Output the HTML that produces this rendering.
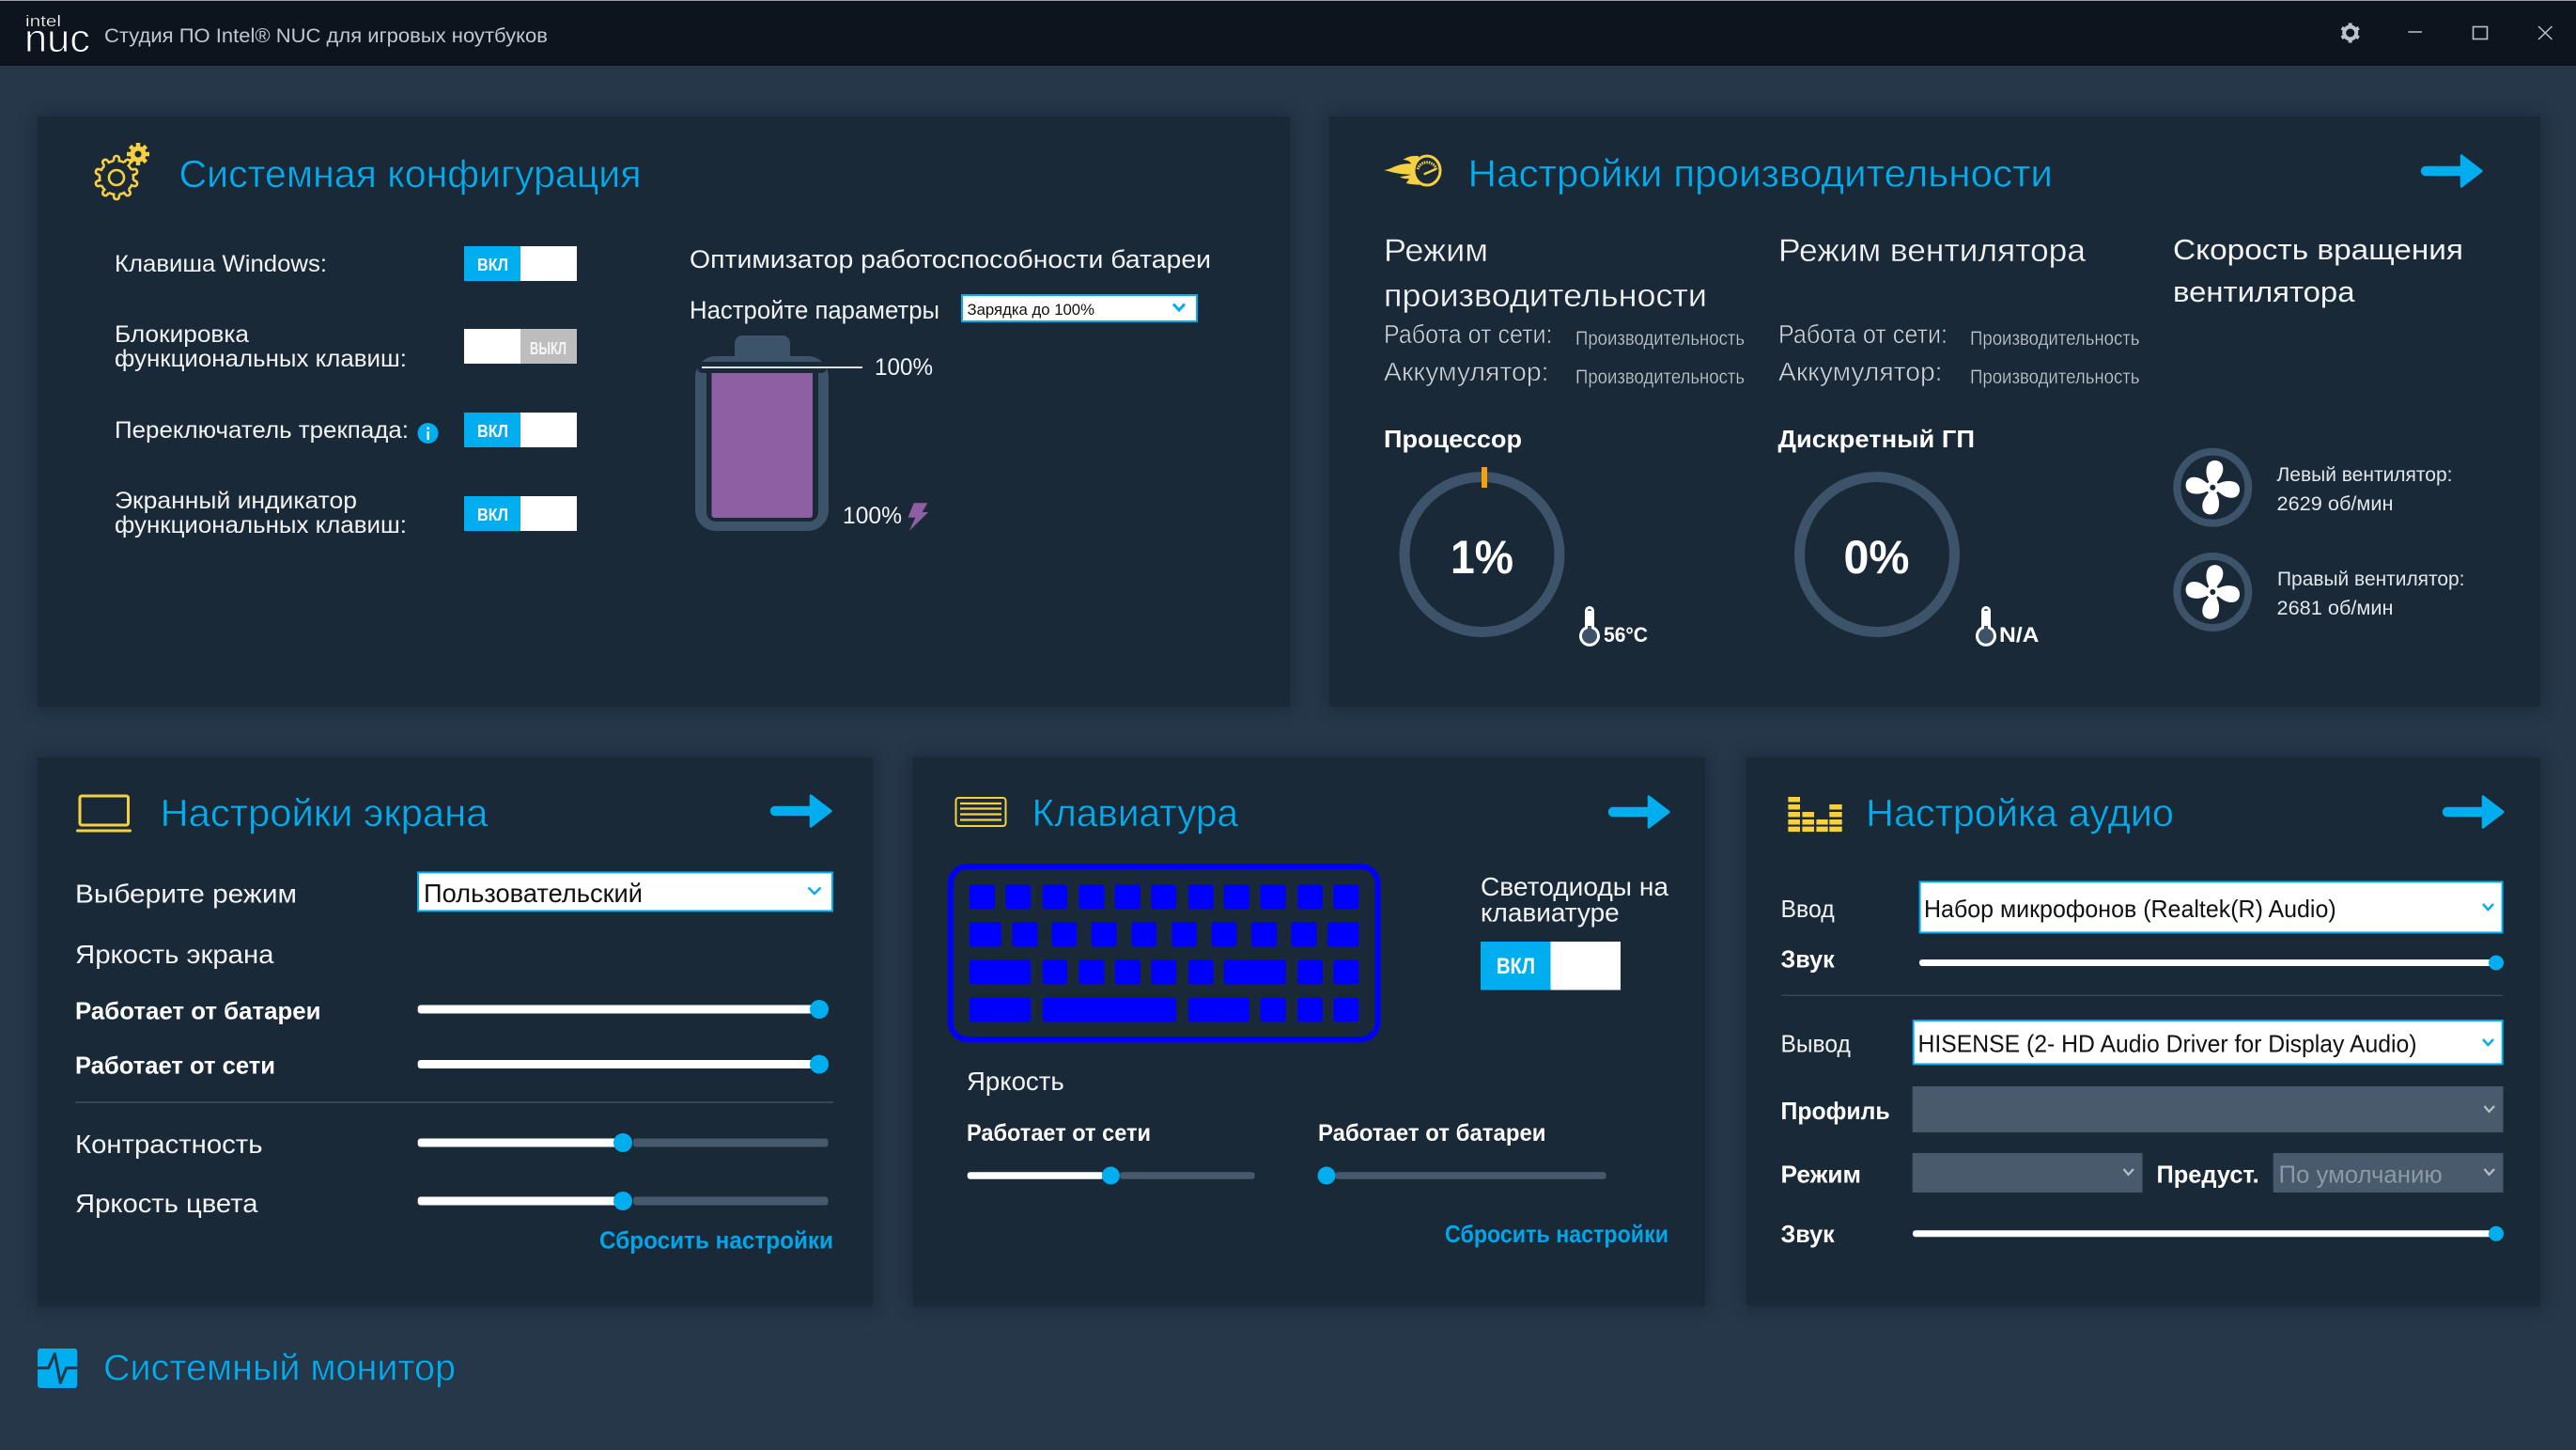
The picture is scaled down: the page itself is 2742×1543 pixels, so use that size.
<!DOCTYPE html>
<html lang="ru"><head><meta charset="utf-8"><title>Студия ПО Intel NUC</title>
<style>
html,body{margin:0;padding:0;width:2742px;height:1543px;overflow:hidden;background:#26374a}
.p{position:absolute;background:#1a2938;box-shadow:0 0 16px 2px rgba(14,24,36,.42)}
svg{position:absolute;left:0;top:0}
text{font-family:"Liberation Sans",sans-serif;fill:#f2f4f6}
.b{font-weight:700;fill:#fff}
.t{fill:#00aeef;font-size:41px;stroke:#1a2938;stroke-width:.6px}
.l{font-size:25px}
.m{font-size:28px}
.h{font-size:34px;stroke:#1a2938;stroke-width:.4px}
.h2{font-size:31px}
.d{font-size:28px;fill:#d0d5da;stroke:#1a2938;stroke-width:.6px}
.s{font-size:21px;fill:#c2c8ce;stroke:#1a2938;stroke-width:.3px}
.f{font-size:21px;fill:#e2e6ea}
.k{fill:#00f}
.y{fill:#f5d142}
</style></head><body>
<div style="position:absolute;left:0;top:0;width:2742px;height:70px;background:#0d141d;border-top:1px solid #9aa0a6;box-sizing:border-box"></div>
<div class="p" style="left:40px;top:124px;width:1333px;height:628px"></div>
<div class="p" style="left:1415px;top:124px;width:1289px;height:628px"></div>
<div class="p" style="left:40px;top:806px;width:889px;height:584px"></div>
<div class="p" style="left:972px;top:806px;width:843px;height:584px"></div>
<div class="p" style="left:1859px;top:806px;width:845px;height:584px"></div>
<svg width="2742" height="1543" viewBox="0 0 2742 1543" xmlns="http://www.w3.org/2000/svg">
<defs>
<path id="arrow" d="M4 15H42V2.5L63.5 19 42 35.5V23H4a4 4 0 0 1 0-8Z" fill="#00aeef" stroke="#00aeef" stroke-width="2.5" stroke-linejoin="round"/>
<path id="tooth" d="M-2.8-17.8Q-3.5-23 0-23Q3.5-23 2.8-17.8A18 18 0 0 1 8.17-16.04" fill="none" stroke="#f5d142" stroke-width="2.6"/>
<path id="blade" d="M0 0C-6-7-9-17-5-25C-1-31 11-30 11-20C11-12 5-7 0 0Z" fill="#fff"/>
<g id="fan">
<circle r="38" fill="none" stroke="#3d5369" stroke-width="8"/>
<use href="#blade"/><use href="#blade" transform="rotate(90)"/><use href="#blade" transform="rotate(180)"/><use href="#blade" transform="rotate(270)"/>
<circle r="7" fill="#fff"/><circle r="3" fill="#1a2938"/>
</g>
<path id="therm" d="M-3.5-9V-27a3.5 3.5 0 0 1 7 0V-9a9.5 9.5 0 1 1-7 0Z" fill="#3d5369" stroke="#fff" stroke-width="3"/>
</defs>

<!-- title bar -->
<text x="27" y="28" font-size="17" textLength="38" lengthAdjust="spacingAndGlyphs" style="fill:#fff;stroke:#0d141d;stroke-width:.3px">intel</text>
<text x="26" y="55" font-size="42" textLength="70" lengthAdjust="spacingAndGlyphs" style="fill:#fff;stroke:#0d141d;stroke-width:1px">nuc</text>
<text x="111" y="45" font-size="21" textLength="472" lengthAdjust="spacingAndGlyphs" style="fill:#bfc8d0">Студия ПО Intel® NUC для игровых ноутбуков</text>
<g transform="translate(2501.7 35)" fill="#b9c4ce">
<circle r="6.5" fill="none" stroke="#b9c4ce" stroke-width="4"/>
<g stroke="#b9c4ce" stroke-width="4"><path d="M0-10.5V-7M0 7V10.5M-9.1-5.2-6-3.5M6 3.5 9.1 5.2M-9.1 5.2-6 3.5M6-3.5 9.1-5.2"/></g>
</g>
<path d="M2563.3 34H2578" stroke="#b9c4ce" stroke-width="1.5"/>
<rect x="2632.5" y="28.5" width="15" height="13" fill="none" stroke="#b9c4ce" stroke-width="1.6"/>
<path d="M2702 28L2716.5 42M2716.5 28L2702 42" stroke="#b9c4ce" stroke-width="1.5"/>

<!-- system config -->
<g transform="translate(124 189)">
<use href="#tooth"/><use href="#tooth" transform="rotate(36)"/><use href="#tooth" transform="rotate(72)"/><use href="#tooth" transform="rotate(108)"/><use href="#tooth" transform="rotate(144)"/><use href="#tooth" transform="rotate(180)"/><use href="#tooth" transform="rotate(216)"/><use href="#tooth" transform="rotate(252)"/><use href="#tooth" transform="rotate(288)"/><use href="#tooth" transform="rotate(324)"/>
<circle r="8" fill="none" stroke="#f5d142" stroke-width="2.6"/>
</g>
<g transform="translate(147 164)">
<circle r="8.5" class="y"/>
<path d="M0-12V12M-12 0H12M-8.5-8.5 8.5 8.5M-8.5 8.5 8.5-8.5" stroke="#f5d142" stroke-width="4.5"/>
<circle r="3.5" fill="#1a2938"/>
</g>
<text class="t" x="190.5" y="199" textLength="492" lengthAdjust="spacingAndGlyphs">Системная конфигурация</text>

<text class="l" x="122" y="289" textLength="226" lengthAdjust="spacingAndGlyphs">Клавиша Windows:</text>
<text class="l" x="122" y="364" textLength="143" lengthAdjust="spacingAndGlyphs">Блокировка</text>
<text class="l" x="122" y="390" textLength="311" lengthAdjust="spacingAndGlyphs">функциональных клавиш:</text>
<text class="l" x="122" y="466" textLength="313" lengthAdjust="spacingAndGlyphs">Переключатель трекпада:</text>
<text class="l" x="122" y="541" textLength="258" lengthAdjust="spacingAndGlyphs">Экранный индикатор</text>
<text class="l" x="122" y="567" textLength="311" lengthAdjust="spacingAndGlyphs">функциональных клавиш:</text>
<circle cx="455.5" cy="461" r="11" fill="#00aeef"/>
<rect x="454.5" y="459" width="2.4" height="9" fill="#fff"/><rect x="454.5" y="454.5" width="2.4" height="2.4" fill="#fff"/>

<rect x="494" y="262" width="60" height="37" fill="#00aeef"/><rect x="554" y="262" width="60" height="37" fill="#fff"/>
<text class="b" x="508" y="288" font-size="18" textLength="33" lengthAdjust="spacingAndGlyphs">ВКЛ</text>
<rect x="494" y="350" width="60" height="37" fill="#fff"/><rect x="554" y="350" width="60" height="37" fill="#bdbdbd"/>
<text class="b" x="564" y="377" font-size="18" textLength="39" lengthAdjust="spacingAndGlyphs" style="fill:#f6f6f6">ВЫКЛ</text>
<rect x="494" y="439" width="60" height="37" fill="#00aeef"/><rect x="554" y="439" width="60" height="37" fill="#fff"/>
<text class="b" x="508" y="465" font-size="18" textLength="33" lengthAdjust="spacingAndGlyphs">ВКЛ</text>
<rect x="494" y="528" width="60" height="37" fill="#00aeef"/><rect x="554" y="528" width="60" height="37" fill="#fff"/>
<text class="b" x="508" y="554" font-size="18" textLength="33" lengthAdjust="spacingAndGlyphs">ВКЛ</text>

<text x="734" y="285" font-size="27" textLength="555" lengthAdjust="spacingAndGlyphs">Оптимизатор работоспособности батареи</text>
<text x="734" y="339" font-size="27" textLength="266" lengthAdjust="spacingAndGlyphs">Настройте параметры</text>
<rect x="1024" y="314" width="250" height="28" fill="#fff" stroke="#00aeef" stroke-width="2"/>
<text x="1029.500" y="335" font-size="17" textLength="135.500" lengthAdjust="spacingAndGlyphs" style="fill:#111">Зарядка до 100%</text>
<path d="M1249 323.500L1255 330 1261 323.500" fill="none" stroke="#00aeef" stroke-width="3"/>

<path d="M782 379V365a8 8 0 0 1 8-8H833a8 8 0 0 1 8 8V379H860a22 22 0 0 1 22 22V543a22 22 0 0 1-22 22H762a22 22 0 0 1-22-22V401a22 22 0 0 1 22-22Z" fill="#3d5369"/>
<rect x="742" y="385" width="138" height="12" rx="6" fill="#1a2938"/>
<path d="M752 390H871V545a10 10 0 0 1-10 10H762a10 10 0 0 1-10-10Z" fill="#1a2938"/>
<path d="M757.500 397H865V548a3 3 0 0 1-3 3H760.500a3 3 0 0 1-3-3Z" fill="#8f5fa3"/>
<rect x="747" y="390" width="171" height="2" fill="#dde0e3"/>
<text x="931" y="399" font-size="25" textLength="62" lengthAdjust="spacingAndGlyphs">100%</text>
<text x="897" y="557" font-size="25" textLength="63" lengthAdjust="spacingAndGlyphs">100%</text>
<polygon points="972.700,535.300 987.300,535.300 981.600,545 988.200,545 967.800,565 974.300,550.700 966.500,550.700" fill="#8f5fa3"/>

<!-- performance -->
<path d="M1510 166Q1500 165 1493.300 170Q1500 170 1502.300 174.300Q1493.300 173.300 1483.300 177.700Q1479 180 1473.300 181Q1481.700 183.300 1486.700 184.300Q1493.300 185.700 1502.300 185.700Q1496.700 187.300 1490 188.300Q1495 191 1500 190Q1498.300 193.300 1496.700 195Q1503.300 196.700 1515 196.700L1510 180Z" class="y"/>
<ellipse cx="1519" cy="181.500" rx="14" ry="15.500" fill="#1a2938" stroke="#f5d142" stroke-width="3"/>
<path d="M1509 180A10.500 10.500 0 0 1 1529 180" fill="none" stroke="#f5d142" stroke-width="3" stroke-dasharray="1.500 1"/>
<path d="M1516.700 185L1528 180" stroke="#f5d142" stroke-width="2.500" stroke-linecap="round"/>
<text class="t" x="1562.500" y="198.500" textLength="622.500" lengthAdjust="spacingAndGlyphs">Настройки производительности</text>
<use href="#arrow" transform="translate(2578 163)"/>

<text class="h" x="1473" y="278" textLength="111" lengthAdjust="spacingAndGlyphs">Режим</text>
<text class="h" x="1473" y="326" textLength="344" lengthAdjust="spacingAndGlyphs">производительности</text>
<text class="h" x="1893" y="278" textLength="327" lengthAdjust="spacingAndGlyphs">Режим вентилятора</text>
<text class="h2" x="2313" y="276" textLength="309" lengthAdjust="spacingAndGlyphs">Скорость вращения</text>
<text class="h2" x="2313" y="321" textLength="193.500" lengthAdjust="spacingAndGlyphs">вентилятора</text>

<text class="d" x="1473" y="365" textLength="179.500" lengthAdjust="spacingAndGlyphs">Работа от сети:</text>
<text class="d" x="1473" y="405" textLength="175.500" lengthAdjust="spacingAndGlyphs">Аккумулятор:</text>
<text class="s" x="1677" y="367" textLength="180" lengthAdjust="spacingAndGlyphs">Производительность</text>
<text class="s" x="1677" y="408" textLength="180" lengthAdjust="spacingAndGlyphs">Производительность</text>
<text class="d" x="1893" y="365" textLength="180" lengthAdjust="spacingAndGlyphs">Работа от сети:</text>
<text class="d" x="1893" y="405" textLength="174.500" lengthAdjust="spacingAndGlyphs">Аккумулятор:</text>
<text class="s" x="2097" y="367" textLength="180.500" lengthAdjust="spacingAndGlyphs">Производительность</text>
<text class="s" x="2097" y="408" textLength="180.500" lengthAdjust="spacingAndGlyphs">Производительность</text>

<text class="b" x="1473" y="476" font-size="26" textLength="147" lengthAdjust="spacingAndGlyphs">Процессор</text>
<text class="b" x="1892.500" y="476" font-size="26" textLength="209.500" lengthAdjust="spacingAndGlyphs">Дискретный ГП</text>
<circle cx="1577.500" cy="590" r="82.500" fill="none" stroke="#3d5369" stroke-width="11"/>
<rect x="1577" y="497" width="6" height="22" fill="#f7a200"/>
<text class="b" x="1544" y="610" font-size="50" textLength="67" lengthAdjust="spacingAndGlyphs">1%</text>
<circle cx="1998" cy="590" r="82.500" fill="none" stroke="#3d5369" stroke-width="11"/>
<text class="b" x="1962.500" y="610" font-size="50" textLength="70" lengthAdjust="spacingAndGlyphs">0%</text>
<use href="#therm" transform="translate(1692 677)"/><path d="M1692 650V666" stroke="#fff" stroke-width="5"/>
<use href="#therm" transform="translate(2114 677)"/><path d="M2114 650V666" stroke="#fff" stroke-width="5"/>
<text class="b" x="1707" y="683" font-size="22" textLength="47" lengthAdjust="spacingAndGlyphs">56°C</text>
<text class="b" x="2128" y="683" font-size="22" textLength="42.500" lengthAdjust="spacingAndGlyphs">N/A</text>

<use href="#fan" transform="translate(2355.300 518.700)"/>
<use href="#fan" transform="translate(2355.300 630)"/>
<text class="f" x="2423.500" y="512" textLength="187" lengthAdjust="spacingAndGlyphs">Левый вентилятор:</text>
<text class="f" x="2423.500" y="543" textLength="124" lengthAdjust="spacingAndGlyphs">2629 об/мин</text>
<text class="f" x="2424" y="623" textLength="199.500" lengthAdjust="spacingAndGlyphs">Правый вентилятор:</text>
<text class="f" x="2423.500" y="654" textLength="124" lengthAdjust="spacingAndGlyphs">2681 об/мин</text>

<!-- display -->
<rect x="85" y="847" width="51.500" height="31" rx="2" fill="none" stroke="#f5d142" stroke-width="3"/>
<rect x="81" y="882.500" width="59" height="3" rx="1.500" class="y"/>
<text class="t" x="170.500" y="879" textLength="349" lengthAdjust="spacingAndGlyphs">Настройки экрана</text>
<use href="#arrow" transform="translate(821 844)"/>
<text class="m" x="80" y="960.500" textLength="236" lengthAdjust="spacingAndGlyphs">Выберите режим</text>
<rect x="445" y="928.400" width="441" height="41" fill="#fff" stroke="#00aeef" stroke-width="2"/>
<text class="m" x="451" y="960" textLength="233" lengthAdjust="spacingAndGlyphs" style="fill:#111">Пользовательский</text>
<path d="M860.500 944.500L867 951 873.500 944.500" fill="none" stroke="#00aeef" stroke-width="2.500"/>
<text class="m" x="80" y="1025" textLength="211.500" lengthAdjust="spacingAndGlyphs">Яркость экрана</text>
<text class="b" x="80" y="1084.500" font-size="26" textLength="261.500" lengthAdjust="spacingAndGlyphs">Работает от батареи</text>
<rect x="444.700" y="1069.500" width="428" height="9" rx="3" fill="#fff"/><circle cx="872" cy="1074" r="10" fill="#00aeef"/>
<text class="b" x="80" y="1142.300" font-size="26" textLength="213" lengthAdjust="spacingAndGlyphs">Работает от сети</text>
<rect x="444.700" y="1128" width="428" height="9" rx="3" fill="#fff"/><circle cx="872" cy="1132.500" r="10" fill="#00aeef"/>
<rect x="80" y="1172" width="807" height="2" fill="#344658"/>
<text class="m" x="80" y="1227" textLength="199.500" lengthAdjust="spacingAndGlyphs">Контрастность</text>
<rect x="444.700" y="1211.500" width="215" height="9" rx="3" fill="#fff"/><rect x="674" y="1211.500" width="207.500" height="9" rx="3" fill="#475a6d"/><circle cx="663" cy="1216" r="10" fill="#00aeef"/>
<text class="m" x="80" y="1290" textLength="194.500" lengthAdjust="spacingAndGlyphs">Яркость цвета</text>
<rect x="444.700" y="1273.500" width="215" height="9" rx="3" fill="#fff"/><rect x="674" y="1273.500" width="207.500" height="9" rx="3" fill="#475a6d"/><circle cx="663" cy="1278" r="10" fill="#00aeef"/>
<text class="b" x="638" y="1328.600" font-size="26" textLength="249" lengthAdjust="spacingAndGlyphs" style="fill:#00a6e8">Сбросить настройки</text>

<!-- keyboard -->
<rect x="1017.500" y="849" width="53" height="30" rx="3" fill="none" stroke="#f5d142" stroke-width="2"/>
<path d="M1022 855H1066M1022 860.500H1066M1022 866.500H1066M1022 872.500H1066" stroke="#f5d142" stroke-width="2.200"/>
<text class="t" x="1098.500" y="879" textLength="219.500" lengthAdjust="spacingAndGlyphs">Клавиатура</text>
<use href="#arrow" transform="translate(1713 845)"/>
<rect x="1011.800" y="922" width="454.700" height="184" rx="18" fill="none" stroke="#00f" stroke-width="6"/>
<g class="k">
<rect x="1031.800" y="941" width="27.200" height="26.400" rx="3"/><rect x="1070.500" y="941" width="26.700" height="26.400" rx="3"/><rect x="1109.700" y="941" width="26.200" height="26.400" rx="3"/><rect x="1148.400" y="941" width="27.200" height="26.400" rx="3"/><rect x="1186.600" y="941" width="27.200" height="26.400" rx="3"/><rect x="1225.300" y="941" width="26.700" height="26.400" rx="3"/><rect x="1265" y="941" width="26.700" height="26.400" rx="3"/><rect x="1302.700" y="941" width="27.200" height="26.400" rx="3"/><rect x="1341.400" y="941" width="27.200" height="26.400" rx="3"/><rect x="1381.200" y="941" width="26.600" height="26.400" rx="3"/><rect x="1419.300" y="941" width="27.200" height="26.400" rx="3"/>
<rect x="1031.800" y="981" width="34" height="26.400" rx="3"/><rect x="1077.300" y="981" width="27.200" height="26.400" rx="3"/><rect x="1119.600" y="981" width="26.700" height="26.400" rx="3"/><rect x="1161.500" y="981" width="27.200" height="26.400" rx="3"/><rect x="1204.400" y="981" width="26.600" height="26.400" rx="3"/><rect x="1247.300" y="981" width="26.600" height="26.400" rx="3"/><rect x="1289.600" y="981" width="26.700" height="26.400" rx="3"/><rect x="1332" y="981" width="27.200" height="26.400" rx="3"/><rect x="1374.400" y="981" width="27.200" height="26.400" rx="3"/><rect x="1413.100" y="981" width="33.400" height="26.400" rx="3"/>
<rect x="1031.800" y="1021.400" width="65.400" height="26" rx="3"/><rect x="1109.700" y="1021.400" width="26.200" height="26" rx="3"/><rect x="1148.400" y="1021.400" width="27.200" height="26" rx="3"/><rect x="1186.600" y="1021.400" width="27.200" height="26" rx="3"/><rect x="1225.300" y="1021.400" width="26.700" height="26" rx="3"/><rect x="1265" y="1021.400" width="26.700" height="26" rx="3"/><rect x="1302.700" y="1021.400" width="65.900" height="26" rx="3"/><rect x="1381.200" y="1021.400" width="26.600" height="26" rx="3"/><rect x="1419.300" y="1021.400" width="27.200" height="26" rx="3"/>
<rect x="1031.800" y="1061.700" width="65.400" height="25.500" rx="3"/><rect x="1109.700" y="1061.700" width="142.300" height="25.500" rx="3"/><rect x="1265" y="1061.700" width="64.900" height="25.500" rx="3"/><rect x="1341.400" y="1061.700" width="27.200" height="25.500" rx="3"/><rect x="1381.200" y="1061.700" width="26.600" height="25.500" rx="3"/><rect x="1419.300" y="1061.700" width="27.200" height="25.500" rx="3"/>
</g>
<text class="m" x="1576" y="953" textLength="200" lengthAdjust="spacingAndGlyphs">Светодиоды на</text>
<text class="m" x="1576" y="980.500" textLength="147.700" lengthAdjust="spacingAndGlyphs">клавиатуре</text>
<rect x="1576" y="1002" width="74.500" height="51.500" fill="#00aeef"/><rect x="1650.500" y="1002" width="74.500" height="51.500" fill="#fff"/>
<text class="b" x="1593" y="1036" font-size="24" textLength="41" lengthAdjust="spacingAndGlyphs">ВКЛ</text>
<text class="m" x="1029" y="1160" textLength="103.700" lengthAdjust="spacingAndGlyphs">Яркость</text>
<text class="b" x="1029" y="1214" font-size="25" textLength="196" lengthAdjust="spacingAndGlyphs">Работает от сети</text>
<text class="b" x="1403" y="1214" font-size="25" textLength="242.500" lengthAdjust="spacingAndGlyphs">Работает от батареи</text>
<rect x="1029.700" y="1247.300" width="145" height="7.500" rx="3" fill="#fff"/><rect x="1192" y="1247.300" width="143.600" height="7.500" rx="3" fill="#475a6d"/><circle cx="1182.400" cy="1251" r="9.500" fill="#00aeef"/>
<rect x="1421" y="1247.300" width="288.600" height="7.500" rx="3" fill="#475a6d"/><circle cx="1412" cy="1251" r="9.500" fill="#00aeef"/>
<text class="b" x="1538" y="1322" font-size="26" textLength="238" lengthAdjust="spacingAndGlyphs" style="fill:#00a6e8">Сбросить настройки</text>

<!-- audio -->
<g class="y">
<rect x="1903.400" y="848" width="12.600" height="5.500"/><rect x="1903.400" y="856" width="12.600" height="5.500"/><rect x="1903.400" y="864" width="12.600" height="5.500"/><rect x="1903.400" y="872" width="12.600" height="5.500"/><rect x="1903.400" y="879.600" width="12.600" height="5.500"/>
<rect x="1918.400" y="864" width="12.600" height="5.500"/><rect x="1918.400" y="872" width="12.600" height="5.500"/><rect x="1918.400" y="879.600" width="12.600" height="5.500"/>
<rect x="1933.400" y="872" width="12.300" height="5.500"/><rect x="1933.400" y="879.600" width="12.300" height="5.500"/>
<rect x="1947.300" y="856" width="13.400" height="5.500"/><rect x="1947.300" y="864" width="13.400" height="5.500"/><rect x="1947.300" y="872" width="13.400" height="5.500"/><rect x="1947.300" y="879.600" width="13.400" height="5.500"/>
</g>
<text class="t" x="1986" y="879" textLength="328" lengthAdjust="spacingAndGlyphs">Настройка аудио</text>
<use href="#arrow" transform="translate(2601 845)"/>
<text x="1895.500" y="976" font-size="26" textLength="57.200" lengthAdjust="spacingAndGlyphs">Ввод</text>
<rect x="2043.600" y="938.400" width="620" height="54" fill="#fff" stroke="#00aeef" stroke-width="2"/>
<text x="2048" y="976" font-size="26" textLength="438.700" lengthAdjust="spacingAndGlyphs" style="fill:#111">Набор микрофонов (Realtek(R) Audio)</text>
<path d="M2643 962L2648.400 968 2654 962" fill="none" stroke="#00aeef" stroke-width="2.500"/>
<text class="b" x="1895.500" y="1029.400" font-size="26" textLength="57.200" lengthAdjust="spacingAndGlyphs">Звук</text>
<rect x="2043" y="1021" width="614" height="7" rx="3" fill="#fff"/><ellipse cx="2657" cy="1024.500" rx="8" ry="8" fill="#00aeef"/>
<rect x="1896.400" y="1058.500" width="768.100" height="1.500" fill="#344658"/>
<text x="1895.500" y="1119.500" font-size="26" textLength="74.300" lengthAdjust="spacingAndGlyphs">Вывод</text>
<rect x="2036.700" y="1086" width="627" height="46.400" fill="#fff" stroke="#00aeef" stroke-width="2"/>
<text x="2041.500" y="1119.500" font-size="26" textLength="531" lengthAdjust="spacingAndGlyphs" style="fill:#111">HISENSE (2- HD Audio Driver for Display Audio)</text>
<path d="M2643 1106L2648.400 1112 2654 1106" fill="none" stroke="#00aeef" stroke-width="2.500"/>
<text class="b" x="1895.500" y="1190.900" font-size="26" textLength="116.100" lengthAdjust="spacingAndGlyphs">Профиль</text>
<rect x="2035.700" y="1156" width="628.800" height="49" fill="#485a6c"/>
<path d="M2644.500 1177L2649.500 1183 2655 1177" fill="none" stroke="#b8c0c8" stroke-width="2.200"/>
<text class="b" x="1895.500" y="1258.700" font-size="26" textLength="85.500" lengthAdjust="spacingAndGlyphs">Режим</text>
<rect x="2035.700" y="1227" width="244.800" height="42" fill="#485a6c"/>
<path d="M2260.500 1244L2265.500 1250 2271 1244" fill="none" stroke="#b8c0c8" stroke-width="2.200"/>
<text class="b" x="2295.500" y="1258.700" font-size="26" textLength="109.200" lengthAdjust="spacingAndGlyphs">Предуст.</text>
<rect x="2419.700" y="1227" width="244.800" height="42" fill="#485a6c"/>
<text x="2425.500" y="1258.700" font-size="26" textLength="174.200" lengthAdjust="spacingAndGlyphs" style="fill:#8d99a5">По умолчанию</text>
<path d="M2644.500 1244L2649.500 1250 2655 1244" fill="none" stroke="#b8c0c8" stroke-width="2.200"/>
<text class="b" x="1895.500" y="1322" font-size="26" textLength="57.200" lengthAdjust="spacingAndGlyphs">Звук</text>
<rect x="2036" y="1309.300" width="621" height="7" rx="3" fill="#fff"/><circle cx="2657" cy="1312.800" r="8" fill="#00aeef"/>

<!-- system monitor -->
<rect x="40" y="1435" width="42.300" height="42" rx="3" fill="#00aeef"/>
<path d="M40 1455.700H51.700L58.300 1440.500 64.300 1471.500 70.700 1455.700H82.300" fill="none" stroke="#26374a" stroke-width="3" stroke-linejoin="round"/>
<text x="110" y="1468.300" font-size="39" textLength="375" lengthAdjust="spacingAndGlyphs" style="fill:#00aeef;stroke:#26374a;stroke-width:.6px">Системный монитор</text>
</svg>
</body></html>
